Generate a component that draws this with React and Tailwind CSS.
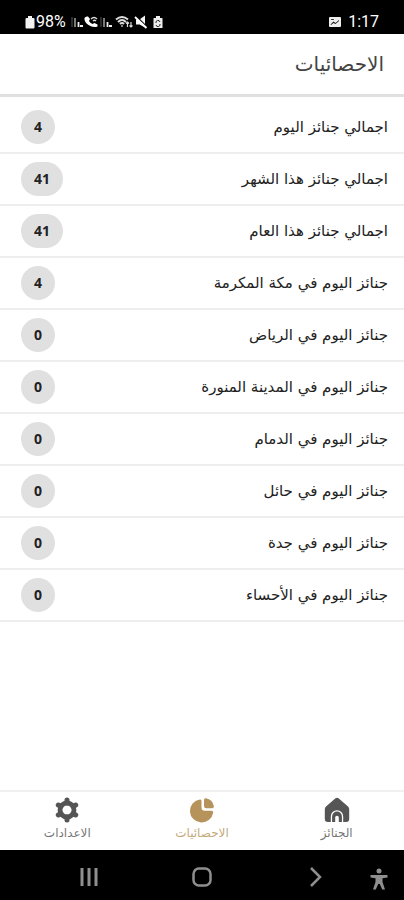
import React from "react";

const stats = [
  { label: "اجمالي جنائز اليوم", value: 4 },
  { label: "اجمالي جنائز هذا الشهر", value: 41 },
  { label: "اجمالي جنائز هذا العام", value: 41 },
  { label: "جنائز اليوم في مكة المكرمة", value: 4 },
  { label: "جنائز اليوم في الرياض", value: 0 },
  { label: "جنائز اليوم في المدينة المنورة", value: 0 },
  { label: "جنائز اليوم في الدمام", value: 0 },
  { label: "جنائز اليوم في حائل", value: 0 },
  { label: "جنائز اليوم في جدة", value: 0 },
  { label: "جنائز اليوم في الأحساء", value: 0 },
];

function HomeIcon() {
  return (
    <svg viewBox="0 0 26 26" className="h-[26px] w-[26px]" fill="currentColor" aria-hidden="true">
      <path d="M11.500 1.300 2 9.600Q.8 10.800.8 12.500V22Q.8 25 3.800 25H6.800V19.500a6.200 6.200 0 0 1 12.400 0V25h3q3 0 3-3V12.500Q25.200 10.800 24 9.600L14.500 1.300Q13 .2 11.500 1.300Z" />
      <path d="M8.100 25V19.500a4.900 4.900 0 0 1 9.800 0V25H14.800V20.500a1.800 1.800 0 0 0-3.600 0V25Z" />
    </svg>
  );
}

function PieIcon() {
  return (
    <svg viewBox="0 0 26 26" className="h-[26px] w-[26px]" fill="currentColor" aria-hidden="true">
      <path d="M11 2.500Q12.500 2.200 12.500 4V10.500q0 3.300 3.300 3.300H22.500q2 0 1.700 1.700A11.700 11.500 0 1 1 11 2.500Z" />
      <path d="M15 2.800Q15 .8 17 1.200A10 10 0 0 1 24.800 9q.4 2.200-1.800 2.200H17.500Q15 11.200 15 8.700Z" />
    </svg>
  );
}

function GearIcon() {
  return (
    <svg viewBox="0 0 26 26" className="h-[26px] w-[26px]" fill="none" stroke="currentColor" aria-hidden="true">
      <circle cx="13" cy="13" r="7" strokeWidth="4.800" />
      <path
        d="M13 3V6M13 20v3M4.300 8l2.600 1.500M19.100 16.500l2.600 1.500M4.300 18 6.900 16.500M19.100 9.500l2.600-1.500"
        strokeWidth="5"
        strokeLinecap="round"
      />
    </svg>
  );
}

const tabs = [
  { label: "الجنائز", icon: HomeIcon, active: false },
  { label: "الاحصائيات", icon: PieIcon, active: true },
  { label: "الاعدادات", icon: GearIcon, active: false },
];

function SignalIcon() {
  return (
    <svg viewBox="0 0 12 12" className="h-3 w-3" aria-hidden="true">
      <path d="M1 1v10" stroke="#555" />
      <path d="M4 2v9" stroke="#bbb" strokeWidth="1.300" />
      <path d="M7.500 6v5M9 10h3" stroke="#eee" strokeWidth="1.800" />
    </svg>
  );
}

function StatusBar() {
  return (
    <div dir="ltr" className="flex h-[34px] shrink-0 items-end justify-between bg-black pr-[25px] pb-1 pl-[25px] text-white">
      <div className="flex items-center gap-px">
        <svg viewBox="0 0 10 14" className="h-3.5 w-2.5" fill="#f2f2f2" aria-hidden="true">
          <path d="M3 1h4v2h1.500q1 0 1 1v8.500q0 1-1 1h-7q-1 0-1-1V4q0-1 1-1H3Z" />
        </svg>
        <span className="mr-1 font-[Roboto] text-base leading-4">98%</span>
        <SignalIcon />
        <svg viewBox="0 0 15 12" className="h-3 w-[15px]" aria-hidden="true">
          <path d="M.5 2q-.5 4 4 7t9 1.500V8.500L10.500 7 8.500 8Q6 7 5 5l1-2L4 .5Q1.500 0 .5 2Z" fill="#fff" />
          <path d="M7 3q3-3 6 0M9 5q1.500-1.500 3 0" fill="none" stroke="#ddd" strokeWidth="1.300" />
        </svg>
        <SignalIcon />
        <svg viewBox="0 0 18 14" className="ml-0.5 h-3.5 w-[18px]" fill="none" stroke="#ddd" aria-hidden="true">
          <path d="M1 4.500q6-5 12 0M3 7q4-4 8 0M5 9q2-2 4 0" strokeWidth="2" />
          <path d="M7 10v2M12.500 7v5m-1.500-3.500L12.500 7l1.500 1.500M16 7v5m-1.500-1.500L16 12l1.500-1.500" strokeWidth="1.200" />
        </svg>
        <svg viewBox="0 0 14 14" className="h-3.5 w-3.5" fill="#f5f5f5" aria-hidden="true">
          <path d="M2 4.500h3.500L11 .5v12L5.500 9.500H2Z" />
          <path d="m2 1 11 11" stroke="#000" strokeWidth="1.500" />
          <path d="m1 2 11.500 11" stroke="#fff" strokeWidth="1.800" />
        </svg>
        <svg viewBox="0 0 10 14" className="ml-1 h-3.5 w-2.5" aria-hidden="true">
          <path d="M3 1h4v2h2q.5 0 .5.500V13H.5V3.500Q.5 3 1 3h2Z" fill="#eee" />
          <path d="M3 8a2 2 0 0 1 4-1M7 9a2 2 0 0 1-4 1" fill="none" stroke="#222" />
        </svg>
      </div>
      <div className="flex items-center gap-1.5">
        <svg viewBox="0 0 14 12" className="h-3 w-3.5" aria-hidden="true">
          <rect x="1" y="1" width="12" height="10" rx="1" fill="#eee" />
          <path d="m2.500 8.500 3-3 2 1.500L11 4v1L7.500 8 5.500 7 3 9Z" fill="#111" />
          <path d="M3 3.500h3" stroke="#444" />
        </svg>
        <span className="font-[Roboto] text-base leading-4">1:17</span>
      </div>
    </div>
  );
}

function SystemNav() {
  return (
    <div dir="ltr" className="relative flex h-[50px] shrink-0 items-center bg-black pt-1 text-[#8f8f8f]">
      <div className="flex flex-1 items-center justify-around px-8">
        <button aria-label="Recents">
          <svg viewBox="0 0 20 20" className="h-5 w-5" stroke="currentColor" strokeWidth="3" aria-hidden="true">
            <path d="M3 1v18M10 1v18M17 1v18" />
          </svg>
        </button>
        <button aria-label="Home">
          <svg viewBox="0 0 20 20" className="h-5 w-5" fill="none" stroke="currentColor" strokeWidth="2.500" aria-hidden="true">
            <rect x="1.500" y="1.500" width="17" height="17" rx="5.500" />
          </svg>
        </button>
        <button aria-label="Back">
          <svg viewBox="0 0 20 20" className="h-5 w-5" fill="none" stroke="currentColor" strokeWidth="2.500" aria-hidden="true">
            <path d="m6 1 9 9-9 9" />
          </svg>
        </button>
      </div>
      <button aria-label="Accessibility" className="absolute right-4 bottom-2.5">
        <svg viewBox="0 0 18 22" className="h-[22px] w-[18px]" fill="currentColor" aria-hidden="true">
          <circle cx="9" cy="3" r="2.500" />
          <path d="M.5 7h17v2.500l-5 .7V14l2.500 7.500h-2.800L9.800 16H8.200l-2.400 5.500H3L5.500 14v-3.800l-5-.7Z" />
        </svg>
      </button>
    </div>
  );
}

export default function App() {
  return (
    <div
      dir="rtl"
      lang="ar"
      className="flex min-h-screen flex-col bg-white font-['DejaVu_Sans',sans-serif] text-[#222]"
    >
      <StatusBar />
      <header className="flex h-[63px] shrink-0 items-center border-b-[3px] border-[#e0e0e0] px-5">
        <h1 className="text-xl leading-6 text-[#444]">الاحصائيات</h1>
      </header>

      <main className="flex-1 pt-[5px]">
        <ul>
          {stats.map((item) => (
            <li
              key={item.label}
              className="flex h-[52px] items-center justify-between border-b-2 border-[#eeeeee] pr-4 pl-[21px]"
            >
              <span className="text-[15px] leading-5">{item.label}</span>
              <span className="flex h-[34px] min-w-[34px] items-center justify-center rounded-full bg-[#e0e0e0] px-[13px] font-['Open_Sans',sans-serif] text-sm font-bold">
                {item.value}
              </span>
            </li>
          ))}
        </ul>
      </main>

      <nav className="flex h-[60px] shrink-0 border-t-2 border-[#f0f0f0]">
        {tabs.map((tab) => (
          <a
            key={tab.label}
            href="#"
            aria-current={tab.active ? "page" : undefined}
            className={`flex flex-1 flex-col items-center gap-0.5 pt-[5px] text-xs leading-4 ${
              tab.active ? "text-[#b5935a]" : "text-[#555]"
            }`}
          >
            <tab.icon />
            <span className="opacity-80">{tab.label}</span>
          </a>
        ))}
      </nav>
      <SystemNav />
    </div>
  );
}
